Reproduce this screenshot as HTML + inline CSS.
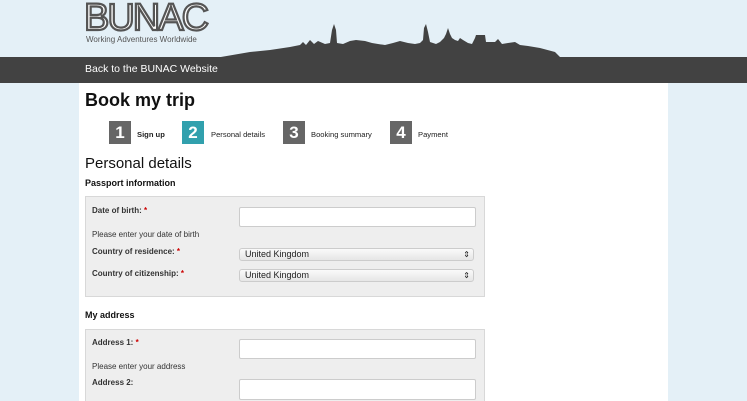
<!DOCTYPE html>
<html><head><style>
*{margin:0;padding:0;box-sizing:border-box}
html,body{width:747px;height:401px;overflow:hidden}
body{background:#e4f0f7;font-family:"Liberation Sans",Arial,sans-serif;position:relative}
.a{position:absolute}
.bar{left:0;top:57px;width:747px;height:26px;background:#424242}
.main{left:79px;top:83px;width:589px;height:318px;background:#fff}
.step{width:22px;height:23px;background:#666;color:#fff;font-size:17px;font-weight:bold;text-align:center;line-height:23px}
.sl{font-size:7.6px;color:#222}
.box{background:#eee;border:1px solid #d8d8d8}
.lab{font-size:8px;font-weight:bold;color:#333}
.lab b{color:#c00}
.hint{font-size:8px;color:#333}
.inp{background:#fff;border:1px solid #ccc;border-radius:2px}
.sel{background:linear-gradient(#fafafa,#e6e6e6);border:1px solid #ccc;border-radius:3px;font-size:9px;color:#222;padding-left:5px;line-height:11px}
.sel:after{content:"⇕";position:absolute;right:3px;top:0;font-size:8px}
</style></head><body>
<div class="a" style="left:84px;top:0px;font-size:38px;letter-spacing:-2px;color:#fff;-webkit-text-stroke:2.2px #555;line-height:36px">BUNAC</div>
<div class="a" style="left:86px;top:35px;font-size:8px;color:#555">Working Adventures Worldwide</div>
<svg class="a" style="left:0;top:0" width="747" height="60">
<path fill="#424242" d="M215 58 L250 52 L270 50 L290 47 L300 45 L303 42 L306 45 L310 40 L314 44 L318 41 L325 44 L330 43 L332 30 L334 24 L336 30 L337 43 L343 44 L350 41 L356 40 L365 41 L372 43 L378 44 L385 45 L393 43 L400 41 L408 43 L415 44 L420 43 L423 40 L424 28 L426 24 L428 32 L430 42 L436 44 L440 42 L444 38 L446 34 L448 28 L450 34 L452 38 L455 40 L458 41 L460 38 L463 40 L468 43 L472 44 L475 38 L476 35 L485 35 L486 42 L495 42 L498 39 L502 44 L508 43 L515 42 L520 45 L528 46 L540 48 L555 52 L560 57 Z"/>
</svg>
<div class="a bar"></div>
<div class="a" style="left:85px;top:63px;font-size:10.5px;color:#fff">Back to the BUNAC Website</div>
<div class="a main"></div>
<div class="a" style="left:85px;top:90px;font-size:18px;font-weight:bold;color:#111">Book my trip</div>
<div class="a step" style="left:109px;top:121px">1</div><div class="a sl" style="left:137px;top:130px;font-weight:bold">Sign up</div>
<div class="a step" style="left:182px;top:121px;background:#31a0ad">2</div><div class="a sl" style="left:211px;top:130px">Personal details</div>
<div class="a step" style="left:283px;top:121px">3</div><div class="a sl" style="left:311px;top:130px">Booking summary</div>
<div class="a step" style="left:390px;top:121px">4</div><div class="a sl" style="left:418px;top:130px">Payment</div>
<div class="a" style="left:85px;top:155px;font-size:15px;color:#111">Personal details</div>
<div class="a lab" style="left:85px;top:178px;font-size:9px;color:#111">Passport information</div>
<div class="a box" style="left:85px;top:196px;width:400px;height:101px"></div>
<div class="a lab" style="left:92px;top:206px">Date of birth: <b>*</b></div>
<div class="a inp" style="left:239px;top:207px;width:237px;height:20px"></div>
<div class="a hint" style="left:92px;top:230px">Please enter your date of birth</div>
<div class="a lab" style="left:92px;top:247px">Country of residence: <b>*</b></div>
<div class="a sel" style="left:239px;top:248px;width:235px;height:13px">United Kingdom</div>
<div class="a lab" style="left:92px;top:269px">Country of citizenship: <b>*</b></div>
<div class="a sel" style="left:239px;top:269px;width:235px;height:13px">United Kingdom</div>
<div class="a lab" style="left:85px;top:310px;font-size:9px;color:#111">My address</div>
<div class="a box" style="left:85px;top:329px;width:400px;height:80px"></div>
<div class="a lab" style="left:92px;top:338px">Address 1: <b>*</b></div>
<div class="a inp" style="left:239px;top:339px;width:237px;height:20px"></div>
<div class="a hint" style="left:92px;top:362px">Please enter your address</div>
<div class="a lab" style="left:92px;top:378px">Address 2:</div>
<div class="a inp" style="left:239px;top:379px;width:237px;height:21px"></div>
</body></html>
